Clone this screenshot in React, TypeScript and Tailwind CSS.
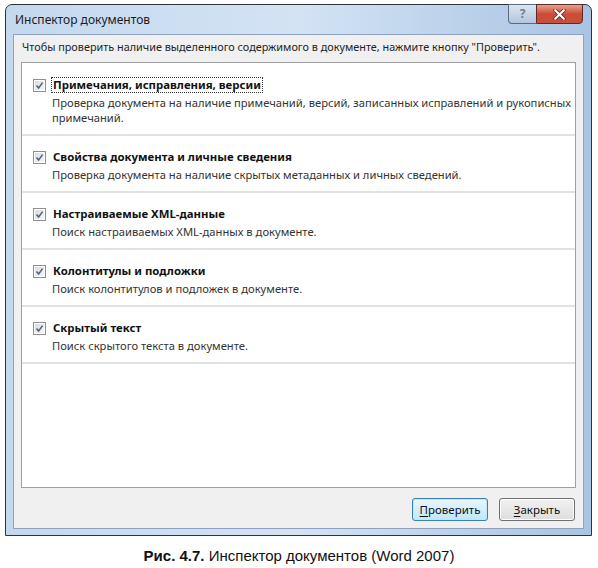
import React from 'react';

const items = [
    {
        title: 'Примечания, исправления, версии',
        desc: (
            <>
                Проверка документа на наличие примечаний, версий, записанных исправлений и рукописных
                <br />
                примечаний.
            </>
        ),
        focused: true,
    },
    { title: 'Свойства документа и личные сведения', desc: 'Проверка документа на наличие скрытых метаданных и личных сведений.' },
    { title: 'Настраиваемые XML-данные', desc: 'Поиск настраиваемых XML-данных в документе.' },
    { title: 'Колонтитулы и подложки', desc: 'Поиск колонтитулов и подложек в документе.' },
    { title: 'Скрытый текст', desc: 'Поиск скрытого текста в документе.' },
];

function CheckBox() {
    return (
        <div className="w-[13px] h-[13px] shrink-0 border border-[#8f8f8f] bg-white p-px">
            <div className="w-full h-full bg-gradient-to-br from-[#dcdcdc] to-[#f6f6f6] relative">
                <svg viewBox="0 0 9 9" className="absolute inset-0 w-full h-full">
                    <path d="M1.5 4.5 L3.6 7 L7.6 1.6" fill="none" stroke="#4d6185" strokeWidth="1.5" />
                </svg>
            </div>
        </div>
    );
}

function Button({ first, rest, primary }: { first: string; rest: string; primary?: boolean }) {
    return (
        <button
            className={
                'w-[76px] h-[23px] rounded-[3px] border text-[11.5px] text-[#111] ' +
                (primary
                    ? 'border-[#3c7fb1] bg-gradient-to-b from-[#eaf6fd] to-[#bee6fd] shadow-[inset_0_0_0_1px_#c0e6f9]'
                    : 'border-[#707070] bg-gradient-to-b from-[#f2f2f2] to-[#dddddd] shadow-[inset_0_0_0_1px_#fcfcfc]')
            }
        >
            <span className="underline underline-offset-2">{first}</span>
            {rest}
        </button>
    );
}

export default function App() {
    return (
        <div className="w-[598px] h-[568px] bg-white pt-[4px] font-['Noto_Sans',sans-serif]">
            <div className="ml-[5px] w-[587px] h-[532px] border border-[#2f3338] rounded-t-[7px] bg-gradient-to-r from-[#c4d8ee] via-[#d3e3f4] to-[#a9c4e3] flex flex-col">
                {/* title bar */}
                <div className="h-[29px] flex justify-between shrink-0">
                    <span className="pl-[9px] pt-[6px] text-[12px] text-[#1b1b1b]">Инспектор документов</span>
                    <div className="flex mr-[8px] h-[20px] -mt-px">
                        <div className="w-[28px] h-full border border-[#5a6a80] border-r-0 rounded-bl-[4px] bg-gradient-to-b from-[#dbe6f2] to-[#b3c6dc] flex items-center justify-center text-[12px] font-bold text-[#6e7f94]">
                            ?
                        </div>
                        <div className="w-[47px] h-full border border-[#5d2a24] rounded-br-[4px] bg-gradient-to-b from-[#e3a08f] via-[#cc4c35] to-[#c9503a] flex items-center justify-center">
                            <svg viewBox="0 0 12 10" className="w-[13px] h-[11px]">
                                <path d="M2 1 L10 9 M10 1 L2 9" stroke="#5a2a24" strokeWidth="3.4" strokeLinecap="round" />
                                <path d="M2 1 L10 9 M10 1 L2 9" stroke="#ffffff" strokeWidth="2" strokeLinecap="round" />
                            </svg>
                        </div>
                    </div>
                </div>
                {/* client */}
                <div className="mx-[7px] mb-[6px] flex-1 border border-[#8da2bd] bg-[#f0f0f0] flex flex-col text-[11.2px] text-[#1e1e1e]">
                    <p className="pl-[8px] pt-[4px] leading-[16px] whitespace-nowrap text-[10.85px]">
                        Чтобы проверить наличие выделенного содержимого в документе, нажмите кнопку "Проверить".
                    </p>
                    <div className="mx-[7px] mt-[7px] flex-1 border border-[#a0a0a0] bg-white pt-px">
                        {items.map((it) => (
                            <div key={it.title} className="border-b-2 border-[#e2e2e2] pt-[13px] pb-[9px] pl-[11px] pr-2">
                                <div className="flex items-center gap-[5px]">
                                    <CheckBox />
                                    <span
                                        className={
                                            'font-bold text-[11.4px] leading-[14px] px-px text-[#111] ' +
                                            (it.focused ? 'border border-dotted border-[#333]' : 'border border-transparent')
                                        }
                                    >
                                        {it.title}
                                    </span>
                                </div>
                                <p className="pl-[19px] mt-[2px] leading-[15px] text-[#333] whitespace-nowrap">{it.desc}</p>
                            </div>
                        ))}
                    </div>
                    <div className="flex justify-end gap-[11px] pt-[10px] pb-[7px] pr-[8px]">
                        <Button first="П" rest="роверить" primary />
                        <Button first="З" rest="акрыть" />
                    </div>
                </div>
            </div>
            <p className="mt-[9px] text-center text-[15px] text-[#111] font-['Liberation_Sans',Arial,sans-serif]">
                <b>Рис. 4.7.</b> Инспектор документов (Word 2007)
            </p>
        </div>
    );
}
